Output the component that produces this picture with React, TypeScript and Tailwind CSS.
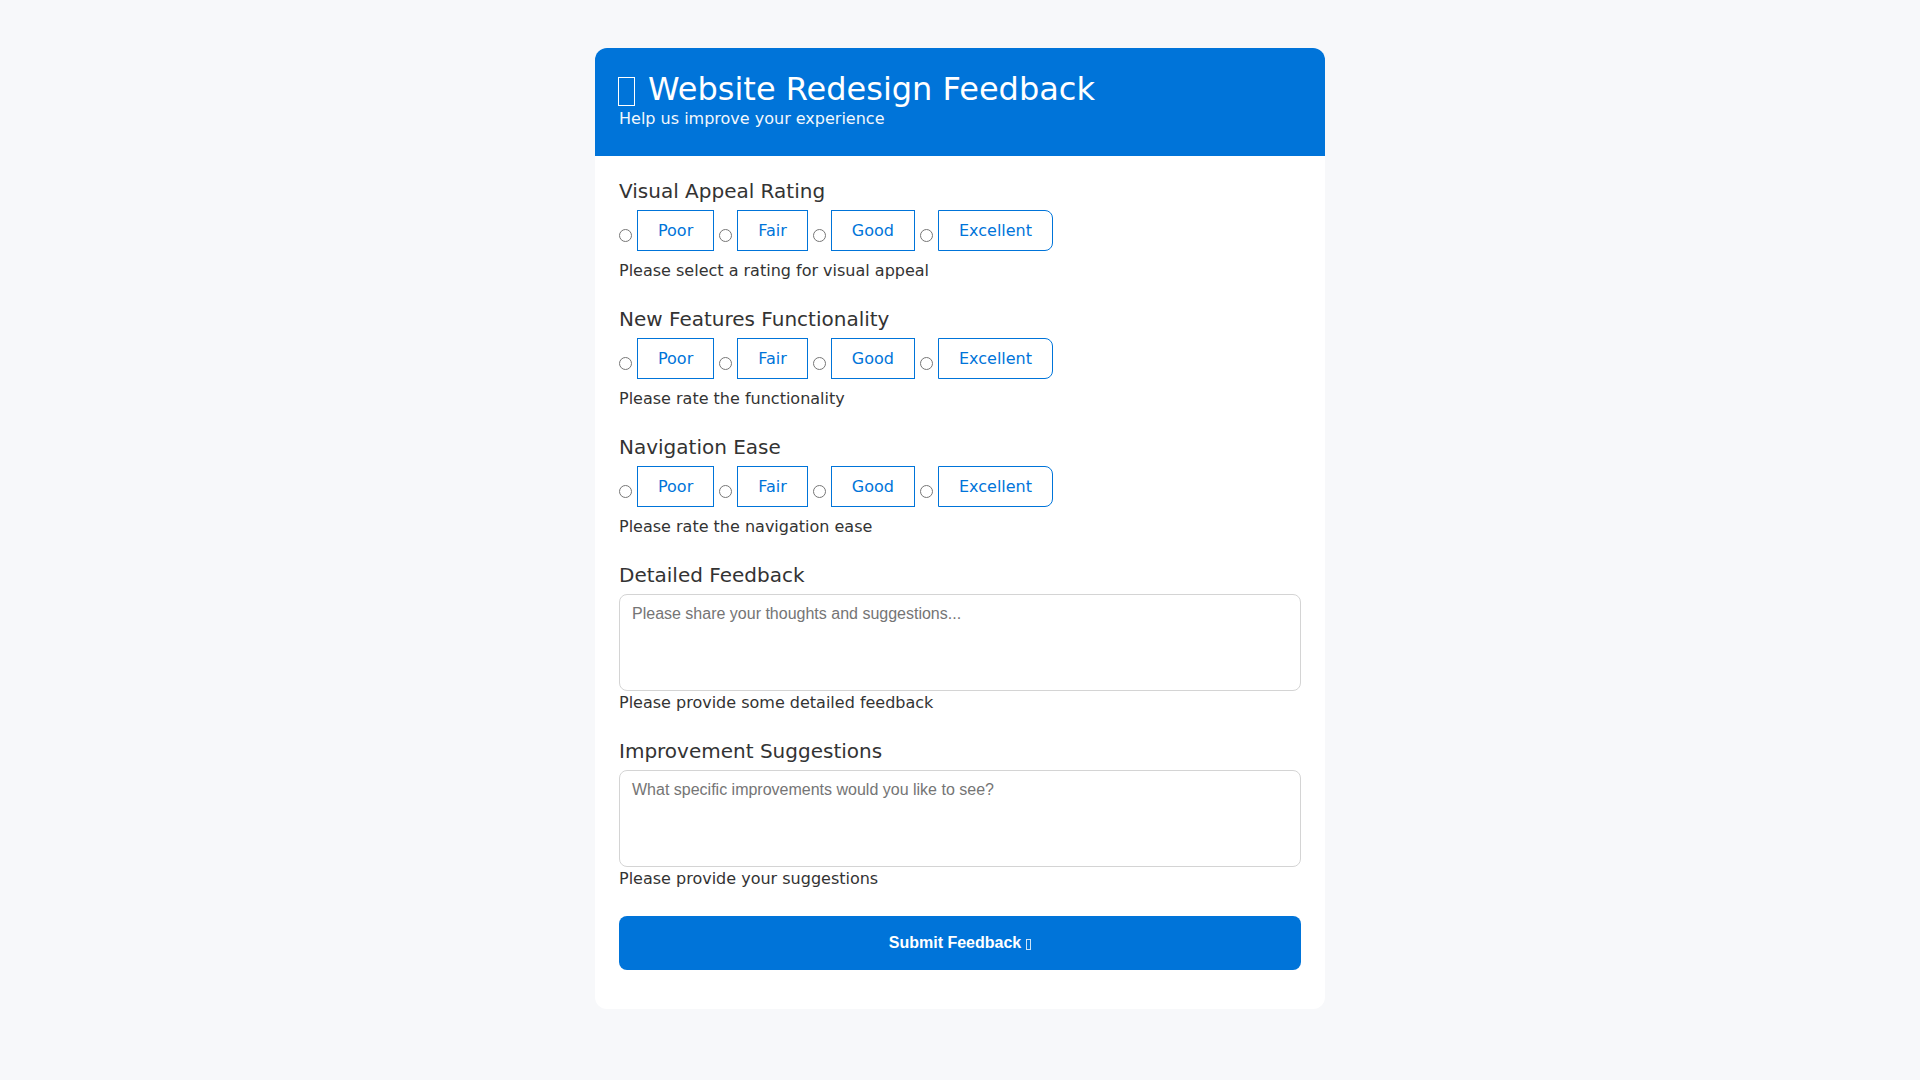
import React, { useState } from 'react';

// Feedback form: three rating groups, two free-text areas, submit button.

type RatingProps = {
    name: string;
    label: string;
    help: string;
    value: string;
    onChange: (v: string) => void;
};

const OPTIONS = ['Poor', 'Fair', 'Good', 'Excellent'];

const RatingGroup: React.FC<RatingProps> = ({ name, label, help, value, onChange }) => (
    <div>
        <div className="text-[20px] leading-[23px] text-[#333] mb-[7px]">{label}</div>
        <div className="flex items-center gap-[5px]">
            {OPTIONS.map((opt, i) => (
                <React.Fragment key={opt}>
                    <input
                        type="radio"
                        name={name}
                        id={`${name}-${opt}`}
                        checked={value === opt}
                        onChange={() => onChange(opt)}
                        className="w-[13px] h-[13px] mt-[10px] shrink-0"
                    />
                    <label
                        htmlFor={`${name}-${opt}`}
                        className={
                            'h-[41px] px-5 flex items-center border border-[#0074D9] text-[#0074D9] text-base cursor-pointer ' +
                            (i === OPTIONS.length - 1 ? 'rounded-r-[8px]' : '')
                        }
                    >
                        {opt}
                    </label>
                </React.Fragment>
            ))}
        </div>
        <div className="mt-2 text-base leading-6 text-[#333]">{help}</div>
    </div>
);

const TextBlock: React.FC<{ label: string; placeholder: string; help: string }> = ({ label, placeholder, help }) => (
    <div>
        <div className="text-[20px] leading-[23px] text-[#333] mb-[7px]">{label}</div>
        <textarea
            placeholder={placeholder}
            className="block w-full h-[97px] px-3 py-[10px] border border-[#d4d4d4] rounded-[8px] resize-none text-base leading-[18px] text-[#333] placeholder:text-[#757575] outline-none"
            style={{ fontFamily: '"Liberation Sans", Arial, sans-serif' }}
        />
        <div className="text-base leading-6 text-[#333]">{help}</div>
    </div>
);

// missing-glyph box, as the emoji shows in the original
const Tofu: React.FC<{ className: string }> = ({ className }) => (
    <span className={'inline-block ' + className} />
);

export default function App() {
    const [visual, setVisual] = useState('');
    const [features, setFeatures] = useState('');
    const [nav, setNav] = useState('');

    return (
        <div className="min-h-screen bg-[#f7f8fa] pt-12 pb-12" style={{ fontFamily: '"DejaVu Sans", sans-serif' }}>
            <div className="w-[730px] mx-auto bg-white rounded-xl overflow-hidden">
                <div className="bg-[#0074D9] text-white px-6 pt-6 pb-[25px]">
                    <h1 className="text-[32px] leading-[34px] font-normal">
                        <Tofu className="w-[17px] h-[29px] border-[1.5px] border-white align-[-6px] mr-[13px] ml-[-1px]" />
                        Website Redesign Feedback
                    </h1>
                    <p className="mt-[1px] text-base leading-6 opacity-95">Help us improve your experience</p>
                </div>
                <form className="px-6 pt-6 pb-[39px] flex flex-col gap-[25px]" onSubmit={(e) => e.preventDefault()}>
                    <RatingGroup name="visual" label="Visual Appeal Rating" help="Please select a rating for visual appeal" value={visual} onChange={setVisual} />
                    <RatingGroup name="features" label="New Features Functionality" help="Please rate the functionality" value={features} onChange={setFeatures} />
                    <RatingGroup name="nav" label="Navigation Ease" help="Please rate the navigation ease" value={nav} onChange={setNav} />
                    <TextBlock label="Detailed Feedback" placeholder="Please share your thoughts and suggestions..." help="Please provide some detailed feedback" />
                    <TextBlock label="Improvement Suggestions" placeholder="What specific improvements would you like to see?" help="Please provide your suggestions" />
                    <button
                        type="submit"
                        className="h-[54px] w-full rounded-[8px] bg-[#0074D9] text-white text-base font-bold flex items-center justify-center"
                        style={{ fontFamily: '"Liberation Sans", Arial, sans-serif' }}
                    >
                        <span>Submit Feedback</span>
                        <Tofu className="ml-[5px] mt-[2px] w-[5px] h-[11px] border border-white/80" />
                    </button>
                </form>
            </div>
        </div>
    );
}
